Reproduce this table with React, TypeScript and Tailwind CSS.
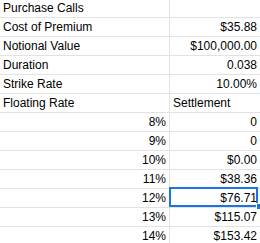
import React from "react";

type Row = { a: string; b: string; aRight?: boolean; bLeft?: boolean; selected?: boolean };

const rows: Row[] = [
  { a: "Purchase Calls", b: "" },
  { a: "Cost of Premium", b: "$35.88" },
  { a: "Notional Value", b: "$100,000.00" },
  { a: "Duration", b: "0.038" },
  { a: "Strike Rate", b: "10.00%" },
  { a: "Floating Rate", b: "Settlement", bLeft: true },
  { a: "8%", b: "0", aRight: true },
  { a: "9%", b: "0", aRight: true },
  { a: "10%", b: "$0.00", aRight: true },
  { a: "11%", b: "$38.36", aRight: true },
  { a: "12%", b: "$76.71", aRight: true, selected: true },
  { a: "13%", b: "$115.07", aRight: true },
  { a: "14%", b: "$153.42", aRight: true },
];

export default function App() {
  return (
    <div
      className="w-[260px] h-[243px] overflow-hidden bg-white text-black text-[12px]"
      style={{ fontFamily: '"Liberation Sans", Arial, sans-serif' }}
    >
      {rows.map((r, i) => {
        const first = i === 0;
        const h = first ? "h-[18px] leading-[16px]" : "h-[19px] leading-[18px]";
        return (
          <div key={i} className={`flex border-b border-[#e2e2e2] ${h}`}>
            <div
              className={`w-[170px] shrink-0 border-r border-[#e2e2e2] px-[3px] whitespace-nowrap ${
                r.aRight ? "text-right" : "text-left"
              }`}
            >
              {r.a}
            </div>
            <div
              className={`relative flex-1 px-[3px] whitespace-nowrap ${
                r.bLeft ? "text-left" : "text-right"
              }`}
            >
              {r.b}
              {r.selected && (
                <>
                  <div className="absolute left-[-1px] top-[-2px] right-[2px] bottom-0 border-2 border-[#1a73e8]" />
                  <div className="absolute right-[-3px] bottom-[-3px] w-[7px] h-[7px] bg-[#1a73e8] border border-white" />
                </>
              )}
            </div>
          </div>
        );
      })}
    </div>
  );
}
